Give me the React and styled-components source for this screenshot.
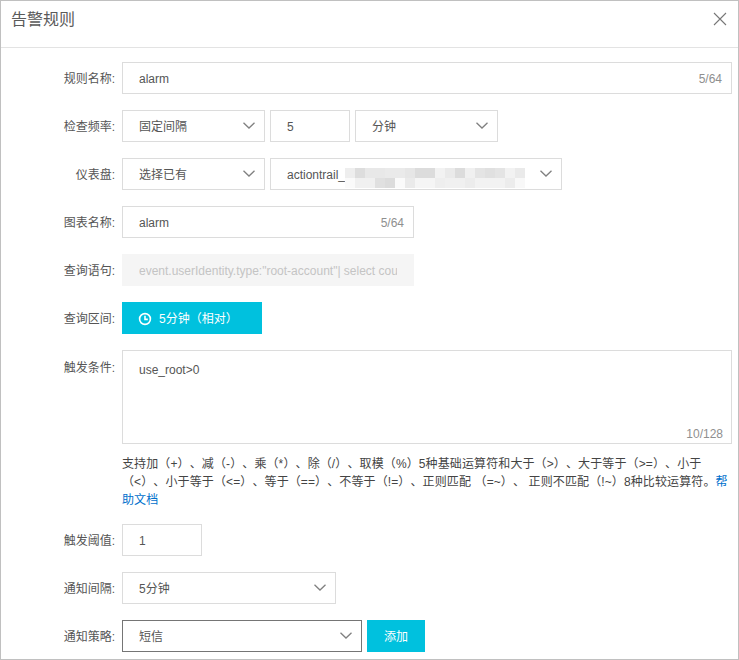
import React from "react";
import styled, { createGlobalStyle } from "styled-components";

const Global = createGlobalStyle`
  html, body { margin: 0; padding: 0; background: #fff; }
  * { box-sizing: border-box; }
  body {
    font-family: "Liberation Sans", "Noto Sans CJK SC", sans-serif;
    font-size: 12px;
    color: #333;
    text-spacing-trim: space-all;
  }
`;

const Dialog = styled.div`
  width: 739px;
  height: 660px;
  border: 1px solid #c0c0c0;
  overflow: hidden;
  background: #fff;
`;
const Header = styled.div`
  height: 47px;
  border-bottom: 1px solid #e3e3e3;
  display: flex;
  align-items: flex-start;
  justify-content: space-between;
  padding: 7px 11px 0 10px;
`;
const Title = styled.div`
  font-size: 16px;
  line-height: 24px;
  color: #5a5a5a;
`;
const Close = styled.svg`
  width: 14px;
  height: 14px;
  margin-top: 4px;
`;
const Form = styled.div`
  display: flex;
  flex-direction: column;
  gap: 16px;
  padding-top: 14px;
`;
const Row = styled.div`
  display: flex;
  align-items: flex-start;
`;
const Label = styled.label`
  width: 114px;
  height: 32px;
  flex: none;
  text-align: right;
  line-height: ${(p) => (p.$tall ? "36px" : "34px")};
  color: #555;
`;
const Controls = styled.div`
  margin-left: 7px;
  display: flex;
  gap: 5px;
`;
const Field = styled.div`
  position: relative;
  width: ${(p) => p.$w}px;
  height: 32px;
  border: 1px solid ${(p) => (p.$dark ? "#757575" : p.$disabled ? "#f5f5f5" : "#dcdcdc")};
  background: ${(p) => (p.$disabled ? "#f5f5f5" : "#fff")};
  display: flex;
  align-items: center;
  justify-content: space-between;
  padding: 2px 9px 0 16px;
  line-height: 20px;
  color: ${(p) => (p.$disabled ? "#c4c4c4" : "#555")};
  white-space: nowrap;
  overflow: hidden;
`;
const Clip = styled.span`
  overflow: hidden;
  width: 258px;
  flex: none;
`;
const Count = styled.span`
  color: #8f8f8f;
`;
const Chevron = styled.svg`
  width: 12px;
  height: 7px;
  flex: none;
  margin-top: -4px;
`;
const Arrow = () => (
  <Chevron viewBox="0 0 12 7">
    <path d="M0.5 0.8 L6 6 L11.5 0.8" fill="none" stroke="#808080" strokeWidth="1.3" />
  </Chevron>
);
const Blur = styled.div`
  position: absolute;
  left: 74px;
  top: 9px;
  display: grid;
  grid-template-columns: repeat(18, 10px);
  grid-auto-rows: 10px;
`;
const BlurCell = styled.i`
  display: block;
  background: ${(p) => p.$c};
`;
const blurColors = [
  "#eeeeee","#dddddd","#e8e8e8","#e8e8e8","#eaeaea","#eaeaea","#e6e6e6","#dcdcdc","#dcdcdc","#f2f2f2","#eaeaea","#dcdcdc","#f0f0f0","#e4e4e4","#e0e0e0","#e4e4e4","#f2f2f2","#eaeaea",
  "#fafafa","#f0f0f0","#f0f0f0","#e0e0e0","#dcdcdc","#fafafa","#eaeaea","#f5f5f5","#f5f5f5","#eeeeee","#f0f0f0","#f0f0f0","#ececec","#f2f2f2","#f2f2f2","#f2f2f2","#ececec","#f8f8f8",
];
const TimeButton = styled.button`
  width: 140px;
  height: 32px;
  border: 0;
  padding: 1px 0 0 16px;
  background: #00c1de;
  color: #fff;
  font: inherit;
  line-height: 20px;
  display: flex;
  align-items: center;
  gap: 7px;
`;
const AddButton = styled.button`
  width: 58px;
  height: 32px;
  border: 0;
  padding: 1px 0 0;
  background: #00c1de;
  color: #fff;
  font: inherit;
  line-height: 20px;
`;
const TextArea = styled.div`
  width: 610px;
  height: 94px;
  border: 1px solid #dcdcdc;
  padding: 12px 16px;
  position: relative;
  color: #555;
`;
const AreaCount = styled.span`
  position: absolute;
  right: 8px;
  bottom: 2px;
  color: #8f8f8f;
`;
const Help = styled.div`
  width: 612px;
  margin-left: 121px;
  margin-top: -5px;
  line-height: 18px;
  letter-spacing: 0.115px;
  color: #444;
  margin-bottom: -1px;
`;
const HelpLink = styled.a`
  color: #0070cc;
`;

export default function App() {
  return (
    <>
      <Global />
      <Dialog>
        <Header>
          <Title>告警规则</Title>
          <Close viewBox="0 0 14 14">
            <path d="M1 1 L13 13 M13 1 L1 13" stroke="#777" strokeWidth="1.1" fill="none" />
          </Close>
        </Header>
        <Form>
          <Row>
            <Label>规则名称:</Label>
            <Controls>
              <Field $w={610}>alarm<Count>5/64</Count></Field>
            </Controls>
          </Row>
          <Row>
            <Label>检查频率:</Label>
            <Controls>
              <Field $w={143}>固定间隔<Arrow /></Field>
              <Field $w={80}>5</Field>
              <Field $w={143}>分钟<Arrow /></Field>
            </Controls>
          </Row>
          <Row>
            <Label>仪表盘:</Label>
            <Controls>
              <Field $w={143}>选择已有<Arrow /></Field>
              <Field $w={292}>
                actiontrail_
                <Blur>
                  {blurColors.map((c, i) => (
                    <BlurCell key={i} $c={c} />
                  ))}
                </Blur>
                <Arrow />
              </Field>
            </Controls>
          </Row>
          <Row>
            <Label>图表名称:</Label>
            <Controls>
              <Field $w={292}>alarm<Count>5/64</Count></Field>
            </Controls>
          </Row>
          <Row>
            <Label>查询语句:</Label>
            <Controls>
              <Field $w={292} $disabled>
                <Clip>event.userIdentity.type:"root-account"| select count(1) as use_root</Clip>
              </Field>
            </Controls>
          </Row>
          <Row>
            <Label>查询区间:</Label>
            <Controls>
              <TimeButton>
                <svg width="14" height="14" viewBox="0 0 14 14" fill="none" stroke="#fff" strokeWidth="1.6">
                  <circle cx="7" cy="7" r="5.4" />
                  <path d="M7 3.8 V7.4 H9.8" />
                </svg>
                5分钟（相对）
              </TimeButton>
            </Controls>
          </Row>
          <Row>
            <Label $tall>触发条件:</Label>
            <Controls>
              <TextArea>use_root&gt;0<AreaCount>10/128</AreaCount></TextArea>
            </Controls>
          </Row>
          <Help>
            支持加（+）、减（-）、乘（*）、除（/）、取模（%）5种基础运算符和大于（&gt;）、大于等于（&gt;=）、小于（&lt;）、小于等于（&lt;=）、等于（==）、不等于（!=）、正则匹配 （=~）、 正则不匹配（!~）8种比较运算符。
            <HelpLink>帮助文档</HelpLink>
          </Help>
          <Row>
            <Label>触发阈值:</Label>
            <Controls>
              <Field $w={80}>1</Field>
            </Controls>
          </Row>
          <Row>
            <Label>通知间隔:</Label>
            <Controls>
              <Field $w={214}>5分钟<Arrow /></Field>
            </Controls>
          </Row>
          <Row>
            <Label>通知策略:</Label>
            <Controls>
              <Field $w={240} $dark>短信<Arrow /></Field>
              <AddButton>添加</AddButton>
            </Controls>
          </Row>
        </Form>
      </Dialog>
    </>
  );
}
